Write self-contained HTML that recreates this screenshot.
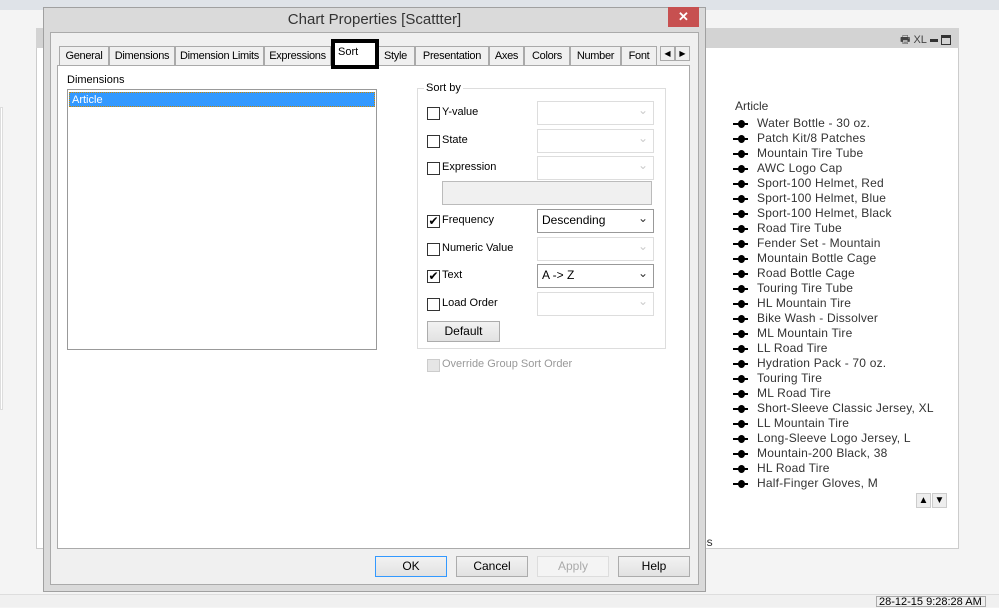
<!DOCTYPE html>
<html><head><style>
*{box-sizing:border-box;margin:0;padding:0}
body{width:999px;height:607px;position:relative;overflow:hidden;background:#f4f4f4;font-family:"Liberation Sans",sans-serif;font-size:11px;color:#000}
.a{position:absolute;white-space:nowrap}
.tab{position:absolute;top:46px;height:19px;border:1px solid #aaa;border-bottom:none;background:#f0f0f0;font-size:11px;text-align:center;line-height:18px;letter-spacing:-0.3px;white-space:nowrap;overflow:hidden}
.cb{position:absolute;left:427px;width:13px;height:13px;border:1px solid #333;background:#fff}
.lbl{position:absolute;left:442px;font-size:11px;white-space:nowrap}
.dd{position:absolute;left:537px;width:117px;height:24px;border:1px solid #ddd;background:#fff}
.dd.on{border-color:#999}
.dd:after{content:"⌄";position:absolute;right:5px;top:1px;font-size:12px;color:#ccc}
.dd.on:after{color:#333}
.btn{position:absolute;top:556px;width:72px;height:21px;border:1px solid #acacac;background:linear-gradient(#f2f2f2,#e2e2e2);text-align:center;line-height:19px;font-size:12px}
.li{position:absolute;left:757px;font-size:12px;color:#333;letter-spacing:0.2px;white-space:nowrap}
.mk{position:absolute;left:733px;width:15px;height:2px;background:#000}
.mk:after{content:"";position:absolute;left:5px;top:-3px;width:7px;height:8px;border-radius:50%;background:#000}
</style></head><body>
<div class="a" style="left:0;top:0;width:999px;height:10px;background:#dfe3e8"></div>
<div class="a" style="left:0;top:107px;width:3px;height:303px;background:#fff;border:1px solid #ddd"></div>
<div class="a" style="left:36px;top:28px;width:923px;height:521px;background:#fff;border:1px solid #ccc"></div>
<div class="a" style="left:36px;top:28px;width:923px;height:20px;background:#d3d3d3"></div>
<div class="a" style="left:900px;top:31px;font-size:11px;color:#444">🖶 XL <span style="display:inline-block;width:8px;height:3px;background:#333;vertical-align:middle"></span> <span style="display:inline-block;width:10px;height:10px;border:1px solid #333;border-top-width:3px;vertical-align:middle"></span></div>
<div class="a" style="left:735px;top:99px;font-size:12px;color:#333">Article</div>
<div class="a" style="left:700px;top:535px;font-size:12px;color:#333">es</div>
<div class="a" style="left:916px;top:493px;width:15px;height:15px;border:1px solid #ccc;background:#eee;font-size:10px;text-align:center;line-height:13px">▲</div>
<div class="a" style="left:932px;top:493px;width:15px;height:15px;border:1px solid #ccc;background:#eee;font-size:10px;text-align:center;line-height:13px">▼</div>
<div class="a" style="left:0;top:594px;width:999px;height:13px;background:#f0f0f0;border-top:1px solid #ddd"></div>
<div class="a" style="left:876px;top:596px;width:110px;height:11px;border:1px solid #aaa;font-size:11px;line-height:11px;padding-left:2px">28-12-15 9:28:28 AM</div>

<!-- dialog -->
<div class="a" style="left:43px;top:7px;width:663px;height:585px;background:#dadada;border:1px solid #a0a0a0"></div>
<div class="a" style="left:43px;top:11px;width:663px;text-align:center;font-size:15px;color:#333">Chart Properties [Scattter]</div>
<div class="a" style="left:668px;top:7px;width:31px;height:20px;background:#c75050;color:#fff;text-align:center;font-size:13px;font-weight:bold;line-height:20px">✕</div>
<div class="a" style="left:50px;top:32px;width:649px;height:553px;background:#f0f0f0;border:1px solid #aaa"></div>
<div class="a" style="left:57px;top:65px;width:633px;height:484px;background:#fff;border:1px solid #aaa"></div>
<div class="tab" style="left:59px;width:50px">General</div>
<div class="tab" style="left:109px;width:66px">Dimensions</div>
<div class="tab" style="left:175px;width:89px">Dimension Limits</div>
<div class="tab" style="left:264px;width:67px">Expressions</div>
<div class="tab" style="left:376px;width:39px">Style</div>
<div class="tab" style="left:415px;width:74px">Presentation</div>
<div class="tab" style="left:489px;width:35px">Axes</div>
<div class="tab" style="left:524px;width:46px">Colors</div>
<div class="tab" style="left:570px;width:51px">Number</div>
<div class="tab" style="left:621px;width:36px">Font</div>
<div class="a" style="left:660px;top:46px;width:15px;height:15px;border:1px solid #aaa;font-size:8px;text-align:center;line-height:13px">◀</div>
<div class="a" style="left:675px;top:46px;width:15px;height:15px;border:1px solid #aaa;font-size:8px;text-align:center;line-height:13px">▶</div>
<div class="a" style="left:331px;top:39px;width:48px;height:30px;border:4px solid #000;background:#fff;font-size:11px;padding:3px 0 0 3px">Sort</div>

<div class="a" style="left:67px;top:74px">Dimensions</div>
<div class="a" style="left:67px;top:89px;width:310px;height:261px;border:1px solid #999;background:#fff"></div>
<div class="a" style="left:69px;top:92px;width:306px;height:15px;background:#3399ff;color:#fff;padding-left:2px;line-height:14px;border:1px dotted #c80">Article</div>

<div class="a" style="left:417px;top:88px;width:249px;height:261px;border:1px solid #ddd"></div>
<div class="a" style="left:424px;top:82px;background:#fff;padding:0 2px">Sort by</div>
<div class="cb" style="top:107px"></div><div class="lbl" style="top:106px">Y-value</div><div class="dd" style="top:101px"></div>
<div class="cb" style="top:135px"></div><div class="lbl" style="top:134px">State</div><div class="dd" style="top:129px"></div>
<div class="cb" style="top:162px"></div><div class="lbl" style="top:161px">Expression</div><div class="dd" style="top:156px"></div>
<div class="a" style="left:442px;top:181px;width:210px;height:24px;border:1px solid #bbb;background:#f0f0f0"></div>
<div class="cb" style="top:215px;font-size:12px;line-height:11px;text-align:center">✔</div><div class="lbl" style="top:214px">Frequency</div><div class="dd on" style="top:209px;font-size:12px;padding:3px 0 0 4px">Descending</div>
<div class="cb" style="top:243px"></div><div class="lbl" style="top:242px">Numeric Value</div><div class="dd" style="top:237px"></div>
<div class="cb" style="top:270px;font-size:12px;line-height:11px;text-align:center">✔</div><div class="lbl" style="top:269px">Text</div><div class="dd on" style="top:264px;font-size:12px;padding:3px 0 0 4px">A -&gt; Z</div>
<div class="cb" style="top:298px"></div><div class="lbl" style="top:297px">Load Order</div><div class="dd" style="top:292px"></div>
<div class="a" style="left:427px;top:321px;width:73px;height:21px;border:1px solid #acacac;background:linear-gradient(#f2f2f2,#e2e2e2);text-align:center;line-height:19px;font-size:12px">Default</div>
<div class="a" style="left:427px;top:359px;width:13px;height:13px;border:1px solid #ccc;background:#e6e6e6"></div>
<div class="a" style="left:442px;top:358px;color:#999">Override Group Sort Order</div>

<div class="btn" style="left:375px;border-color:#3399ff">OK</div>
<div class="btn" style="left:456px">Cancel</div>
<div class="btn" style="left:537px;color:#aaa;border-color:#ddd;background:#f4f4f4">Apply</div>
<div class="btn" style="left:618px">Help</div>

<div class="a" style="left:0;top:0">
<div class="mk" style="top:123px"></div><div class="li" style="top:116px">Water Bottle - 30 oz.</div>
<div class="mk" style="top:138px"></div><div class="li" style="top:131px">Patch Kit/8 Patches</div>
<div class="mk" style="top:153px"></div><div class="li" style="top:146px">Mountain Tire Tube</div>
<div class="mk" style="top:168px"></div><div class="li" style="top:161px">AWC Logo Cap</div>
<div class="mk" style="top:183px"></div><div class="li" style="top:176px">Sport-100 Helmet, Red</div>
<div class="mk" style="top:198px"></div><div class="li" style="top:191px">Sport-100 Helmet, Blue</div>
<div class="mk" style="top:213px"></div><div class="li" style="top:206px">Sport-100 Helmet, Black</div>
<div class="mk" style="top:228px"></div><div class="li" style="top:221px">Road Tire Tube</div>
<div class="mk" style="top:243px"></div><div class="li" style="top:236px">Fender Set - Mountain</div>
<div class="mk" style="top:258px"></div><div class="li" style="top:251px">Mountain Bottle Cage</div>
<div class="mk" style="top:273px"></div><div class="li" style="top:266px">Road Bottle Cage</div>
<div class="mk" style="top:288px"></div><div class="li" style="top:281px">Touring Tire Tube</div>
<div class="mk" style="top:303px"></div><div class="li" style="top:296px">HL Mountain Tire</div>
<div class="mk" style="top:318px"></div><div class="li" style="top:311px">Bike Wash - Dissolver</div>
<div class="mk" style="top:333px"></div><div class="li" style="top:326px">ML Mountain Tire</div>
<div class="mk" style="top:348px"></div><div class="li" style="top:341px">LL Road Tire</div>
<div class="mk" style="top:363px"></div><div class="li" style="top:356px">Hydration Pack - 70 oz.</div>
<div class="mk" style="top:378px"></div><div class="li" style="top:371px">Touring Tire</div>
<div class="mk" style="top:393px"></div><div class="li" style="top:386px">ML Road Tire</div>
<div class="mk" style="top:408px"></div><div class="li" style="top:401px">Short-Sleeve Classic Jersey, XL</div>
<div class="mk" style="top:423px"></div><div class="li" style="top:416px">LL Mountain Tire</div>
<div class="mk" style="top:438px"></div><div class="li" style="top:431px">Long-Sleeve Logo Jersey, L</div>
<div class="mk" style="top:453px"></div><div class="li" style="top:446px">Mountain-200 Black, 38</div>
<div class="mk" style="top:468px"></div><div class="li" style="top:461px">HL Road Tire</div>
<div class="mk" style="top:483px"></div><div class="li" style="top:476px">Half-Finger Gloves, M</div>
</div>
</body></html>
